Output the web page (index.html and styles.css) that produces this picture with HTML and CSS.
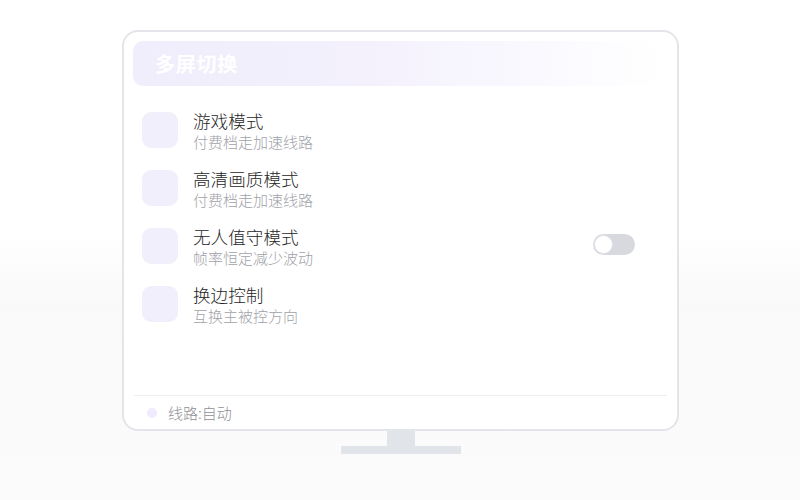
FILE: index.html
```html
<!DOCTYPE html>
<html lang="zh-CN">
<head>
<meta charset="utf-8">
<title>多屏切换</title>
<link rel="stylesheet" href="styles.css">
</head>
<body>
<div class="stage">
  <div class="monitor">
    <div class="screen">
      <div class="header"><span class="header-title">多屏切换</span></div>
      <div class="list">
        <div class="row">
          <div class="icon"></div>
          <div class="text">
            <div class="title">游戏模式</div>
            <div class="sub">付费档走加速线路</div>
          </div>
        </div>
        <div class="row">
          <div class="icon"></div>
          <div class="text">
            <div class="title">高清画质模式</div>
            <div class="sub">付费档走加速线路</div>
          </div>
        </div>
        <div class="row">
          <div class="icon"></div>
          <div class="text">
            <div class="title">无人值守模式</div>
            <div class="sub">帧率恒定减少波动</div>
          </div>
          <div class="toggle"><div class="knob"></div></div>
        </div>
        <div class="row">
          <div class="icon"></div>
          <div class="text">
            <div class="title">换边控制</div>
            <div class="sub">互换主被控方向</div>
          </div>
        </div>
      </div>
      <div class="spacer"></div>
      <div class="divider"></div>
      <div class="footer">
        <span class="dot"></span>
        <span class="footer-text">线路:自动</span>
      </div>
    </div>
    <div class="neck"></div>
    <div class="base"></div>
  </div>
</div>
</body>
</html>
```

FILE: styles.css
```css
html, body {
  margin: 0;
  padding: 0;
}
body {
  width: 800px;
  height: 500px;
  overflow: hidden;
  font-family: "Noto Sans CJK SC", "Noto Sans", sans-serif;
  background: linear-gradient(to bottom, #ffffff 0, #ffffff 230px, #f9f9fa 300px, #fbfbfc 500px);
}
.stage {
  display: flex;
  justify-content: center;
  padding-top: 30px;
}
.monitor {
  display: flex;
  flex-direction: column;
  align-items: center;
  margin-left: 1px;
}
.screen {
  box-sizing: border-box;
  width: 557px;
  height: 401px;
  border: 2px solid #e3e5ea;
  border-radius: 16px;
  background: #ffffff;
  display: flex;
  flex-direction: column;
  padding: 9px 0 0 0;
}
.header {
  margin: 0 10px 0 9px;
  height: 45px;
  border-radius: 10px;
  background: linear-gradient(90deg, #f0edfc 0%, #f4f1fd 45%, rgba(255,255,255,0) 100%);
  display: flex;
  align-items: center;
  padding-left: 22px;
}
.header-title {
  color: #ffffff;
  font-size: 20px;
  font-weight: 700;
  letter-spacing: 0.75px;
}
.list {
  display: flex;
  flex-direction: column;
  gap: 22px;
  padding: 26px 42px 0 18px;
}
.row {
  display: flex;
  align-items: center;
  height: 36px;
}
.icon {
  width: 36px;
  height: 36px;
  border-radius: 9px;
  background: #f2effd;
  flex: none;
}
.text {
  margin-left: 15px;
  padding-top: 2px;
  display: flex;
  flex-direction: column;
  flex: 1;
}
.title {
  font-size: 17.6px;
  line-height: 22px;
  color: #262626;
  font-weight: 300;
}
.sub {
  font-size: 15px;
  line-height: 20px;
  color: #a0a2a8;
  font-weight: 300;
}
.toggle {
  width: 42px;
  height: 21px;
  border-radius: 11px;
  background: #d7d9df;
  display: flex;
  align-items: center;
  padding-left: 1px;
  box-sizing: border-box;
  margin-top: -3px;
}
.knob {
  width: 17px;
  height: 17px;
  border-radius: 50%;
  background: #ffffff;
  border: 1px solid #e2e4e9;
}
.spacer {
  flex: 1;
}
.divider {
  height: 1px;
  background: #eceef2;
  margin: 0 10px;
}
.footer {
  height: 33px;
  display: flex;
  align-items: center;
  padding-left: 23px;
  box-sizing: border-box;
}
.dot {
  width: 10px;
  height: 10px;
  border-radius: 50%;
  background: #efebfc;
}
.footer-text {
  margin-left: 11px;
  font-size: 15px;
  color: #8e9096;
  font-weight: 300;
}
.neck {
  width: 28px;
  height: 15px;
  background: #e1e4e8;
}
.base {
  width: 120px;
  height: 8px;
  background: #e1e4e8;
}
```
